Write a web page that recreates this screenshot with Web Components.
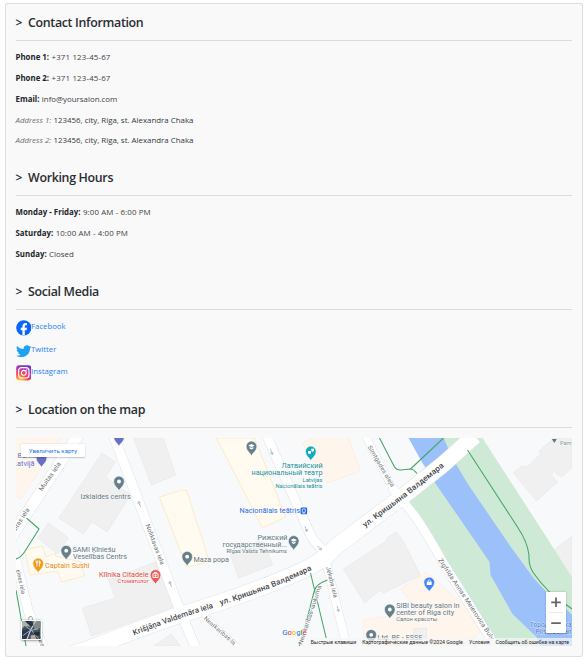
<!DOCTYPE html>
<html lang="en">
<head>
<meta charset="utf-8">
<title>Contact Information</title>
<style>
body{margin:0;background:#fff;font-family:"Open Sans","Noto Sans",sans-serif;color:#212529}
</style>
</head>
<body>
<contact-card>
  <info-section heading="Contact Information" style="height:155px">
    <info-row label="Phone 1:" style="--ls:.17px">+371 123-45-67</info-row>
    <info-row label="Phone 2:" style="--ls:.17px">+371 123-45-67</info-row>
    <info-row label="Email:">info@yoursalon.com</info-row>
    <info-row soft label="Address 1:">123456, city, Riga, st. Alexandra Chaka</info-row>
    <info-row soft label="Address 2:">123456, city, Riga, st. Alexandra Chaka</info-row>
  </info-section>
  <info-section heading="Working Hours" style="height:114px">
    <info-row label="Monday - Friday:" style="--ls:.12px">9:00 AM - 6:00 PM</info-row>
    <info-row label="Saturday:" style="--ls:.12px">10:00 AM - 4:00 PM</info-row>
    <info-row label="Sunday:">Closed</info-row>
  </info-section>
  <info-section heading="Social Media" style="height:118px;--top:5px">
    <social-link icon="facebook" style="height:24px">Facebook</social-link>
    <social-link icon="twitter" style="height:21.5px">Twitter</social-link>
    <social-link icon="instagram" style="height:23px">Instagram</social-link>
  </info-section>
  <info-section heading="Location on the map">
    <street-map></street-map>
  </info-section>
</contact-card>
<script>
function define(name, html, setup){
  customElements.define(name, class extends HTMLElement{
    constructor(){
      super();
      this.attachShadow({mode:'open'}).innerHTML = html;
    }
    connectedCallback(){ if(setup) setup(this, this.shadowRoot); }
  });
}

define('contact-card', `<style>
:host{display:block;box-sizing:border-box;width:578px;height:653.5px;margin:3px 0 0 4.5px;padding:0 10px;border:1px solid #dfdfdf;border-radius:3px;background:#f9f9f9;box-shadow:0 0 1px #ddd}
</style><slot></slot>`);

define('info-section', `<style>
:host{display:block;box-sizing:border-box}
h2{margin:0;height:37px;padding-top:1px;box-sizing:border-box;display:flex;align-items:center;gap:4px;font-size:12.4px;font-weight:600;letter-spacing:-.32px;line-height:18px;border-bottom:1px solid #dcdcdc;color:#2a2e32;white-space:nowrap}
h2 i{font-style:normal;font-size:12px;width:8.5px;}
.body{padding-top:var(--top,6px)}
</style><h2><i>&gt;</i><span></span></h2><div class="body"><slot></slot></div>`,
(el, root) => { root.querySelector('span').textContent = el.getAttribute('heading'); });

define('info-row', `<style>
:host{display:flex;gap:2.4px;height:20.75px;align-items:center;font-size:7.88px;line-height:12px;color:#3c4146;white-space:nowrap}
span{letter-spacing:var(--ls,0)}
b{font-weight:700;color:#212529}
:host([soft]) b{font-weight:400;font-style:italic;color:#6b6f73}
:host([soft]){color:#33383c}
</style><b></b><span><slot></slot></span>`,
(el, root) => { root.querySelector('b').textContent = el.getAttribute('label'); });

const icons = {
facebook:`<circle cx="8" cy="8" r="7.8" fill="#0866ff"/><path d="M6.6 15.6V10.4H4.9V8h1.7V6.7c0-2.4 1.2-3.6 3.3-3.6.5 0 1 .1 1.4.2v2.1h-1c-1 0-1.3.5-1.3 1.3V8h2.3l-.5 2.4H9v5.3z" fill="#fff"/>`,
twitter:`<path transform="translate(0 1) scale(.667 .62)" d="M23.95 4.57a10 10 0 0 1-2.82.77 4.96 4.96 0 0 0 2.16-2.72c-.95.55-2 .95-3.13 1.18a4.92 4.92 0 0 0-8.38 4.48C7.69 8.1 4.07 6.13 1.64 3.16a4.9 4.9 0 0 0-.67 2.48c0 1.71.87 3.21 2.19 4.1a4.9 4.9 0 0 1-2.23-.62v.06a4.92 4.92 0 0 0 3.95 4.83 5 5 0 0 1-2.21.08 4.94 4.94 0 0 0 4.6 3.42A9.87 9.87 0 0 1 0 19.54a14 14 0 0 0 7.55 2.21c9.05 0 14-7.5 14-13.98 0-.21 0-.42-.02-.63a9.94 9.94 0 0 0 2.42-2.57z" fill="#1da1f2"/>`,
instagram:`<defs><radialGradient id="g" cx=".25" cy="1.05" r="1.1"><stop offset="0" stop-color="#ffdd55"/><stop offset=".15" stop-color="#ffb340"/><stop offset=".45" stop-color="#fb4a45"/><stop offset=".7" stop-color="#c837a6"/><stop offset="1" stop-color="#6a38c8"/></radialGradient></defs><rect x=".2" y=".2" width="15.6" height="15.6" rx="3.4" fill="url(#g)"/><g fill="none" stroke="#fff" stroke-width="1.2"><rect x="2.7" y="2.7" width="10.6" height="10.6" rx="3"/><circle cx="8" cy="8" r="2.5"/></g><circle cx="11" cy="5" r=".75" fill="#fff"/>`};

define('social-link', `<style>
:host{display:flex;align-items:center;font-size:7.75px;line-height:12px;color:#2680f5;white-space:nowrap}
svg{width:15.6px;height:15.6px;margin-top:1.5px;flex:none}
span{margin-bottom:1.6px}
</style><svg viewBox="0 0 16 16"></svg><span><slot></slot></span>`,
(el, root) => { root.querySelector('svg').innerHTML = icons[el.getAttribute('icon')]; });

const streets = [
  ['M78.5 434L10 538',11],
  ['M112.5 434L180 612L196 650',9.5],
  ['M265.5 434L306 526Q312 542 323 550L331 558',9],
  ['M323 552L333 592L347 650',8],
  ['M364 434L396 496',7],
  ['M392 488L415 517Q428 536 441 560L497 650',8.5],
  ['M13 550L28 612L44 650',9],
  ['M202 613L241 650',4],
  ['M40 664L90 648Q135 630 176 616Q250 594 301 571Q323 561 335 547L404 495L443 464L474 436',16]
];
const greys = ['101.7,453 115,462 105,477 130,495 106.7,531.7 91,521.7 83.3,534 58.3,518.3','48,523 68,538 57,554 37,538','133,438 163,438 175,475 151,485','108,580 155,562 173,607 91,636 82,608 115,598','230,555 258,541 264,543 272,565 238,578','343,569 386,541 387,537 396,532 402,540 420,575 383,593 380,590 364,603','513,473 521,466 527,467 541,453 538,452 553,438 571.5,438 571.5,468 561,477 553,471 551,475 557,482 536,501','551,552 571.5,536 571.5,578','413,629 426,628 426,646 413,646','153,646 171,634 180,646'];
const yellows = ['159,497 178,491 180,489.5 182,491 186,490 209,562 186,567','216,438 254,438 285,517 262,528','24,550 42,546 45,557 55,553 55,556 80,562 84,576 61,582 57,571 30,575'];
const oranges = ['15,438 61,438 20,499 15,496','302,443 312,438 348,438 360,471 327,483','401,588 426,572 473,614 480,632 462,646 363,646 363,620 401,614 415,610'];
const paths = ['M26 518L38.5 529L24 552Q20 558 15 559','M15.5 590L25.5 646','M379 438L394 467Q396 470 400 470L410 469Q413 469 416.5 473.5','M410 469L443 438','M310 573L325.7 638','M299 646L305 625L314 590Q316 584 327 580','M467 450L517 527Q527 542 528.5 555Q528 566 533 573Q540 583 549 592L571.5 609'];
const grey='#5f7782', slate='#66808b';
/* text, x, baseline, width, size, colour */
const labels = [
  ['Latvijā',12.5,465.5,21.5,7.3,'#6670c4'],['Banka',17,458,20,7.3,'#6670c4'],
  ['Izklaides centrs',80,498.7,50.3,7.2,grey],
  ['SAMI Ķīniešu',72,552,43,7.2,grey],['Veselības Centrs',72.5,559.3,54,7.2,grey],
  ['Captain Sushi',44.5,568.3,44.5,7.2,'#e58a1c'],
  ['Klīnika Citadele',98.6,577.2,49.4,7.2,'#dd4a42'],['Стоматолог',117,583,31.5,5.6,'#dd4a42'],
  ['Maza popa',193,562.3,35.5,7.2,grey],
  ['Рижский',257,539.5,30,7,grey],['государственный...',222,546.7,64.5,7,grey],['Rīgas Valsts Tehnikums',226,552.7,60.5,5.8,grey],
  ['Латвийский',281,468,41.2,7.3,'#178f98'],['национальный театр',251,475.4,71,7.3,'#178f98'],['Latvijas',302,481.7,20,6,'#178f98'],['Nacionālais teātris',275,487.5,47,6,'#178f98'],
  ['Nacionālais teātris',239,513.4,60.5,7.1,'#2a6be0'],
  ['SIBI beauty salon in',395.7,607.5,63.3,7.2,grey],['center of Riga city',395.7,615,58,7.2,grey],['Салон красоты',395.7,621.2,41,5.6,grey],
  ['Ltd. BF - ESSE',377,639.5,45,7.2,grey],['Pam',559.5,444.5,11.5,6,'#8197a0'],
  ['Городской ка',530,626.8,41,7,'#3c74cf'],['Pilsētas kan',535,634,36,7,'#3c74cf']
];
/* guide path, text, length, size, colour, weight */
const curved = [
  ['M133.5 635.5Q176 618.5 216 607','Krišjāņa Valdemāra iela',84,7.8,'#45484b',500],
  ['M220 605Q271 590 314 568.5','ул. Кришьяна Валдемара',98,7.8,'#45484b',500],
  ['M364.5 527.5L404 498L447 464','ул. Кришьяна Валдемара',100,7.8,'#45484b',500],
  ['M41.5 491.5L63 460.5','Muitas iela',33.5,6.5],['M11.5 537L30 508.5','Muitas iela',32.5,6.5],
  ['M145 525L162 570','Noliktavas iela',43,6.2],
  ['M367 447L393 491','Simtgades aleja',47,6.2],
  ['M437.5 560L497 650','Zigfrīda Annas Meierovica Bulv.',98,6.3],
  ['M325.5 567L335 605','Jēkaba iela',32,6],
  ['M203 619L242 653','Neatkarības-la',40,6],
  ['M301.5 645L324 577','Neatkarības-laukums',62,6],
  ['M15.5 570L22 599','elnes iela',25,6],
  ['M27 617L42 650','Citadeles',34,6]
];
const pins = [[118.5,481.5,slate,'dot'],[251,446.5,slate,'cap'],[65.7,550.7,slate,'dot'],[186.7,556.7,slate,'dot'],[293.2,541,slate,'cap'],[389.3,609.5,slate,'dot'],[370.7,634.8,slate,'dot'],[41,458,'#6670c4',''],[118.5,437,'#6670c4',''],[310.3,451.5,'#12abc0','mask'],[37.7,563.5,'#f09a1a','fork'],[155,575,'#ea5b55','box'],[428.7,582.5,'#4285f4','bag']];
const glyphs = {
  '':'', dot:'<circle r="1.9" fill="#fff"/>',
  cap:'<path d="M-3.2-.9L0-2.6L3.2-.9L0 .8ZM-1.9.6L0 1.6L1.9.6V2L0 3L-1.9 2Z" fill="#fff"/>',
  mask:'<path d="M-2.8-.6H.2V1.7Q-1.3 3.2-2.8 1.7ZM.4-2.8H3.2V-.5Q2 .8.8 0V-1.2H.4Z" fill="#fff"/>',
  fork:'<path d="M-2-3V-.7H-1.3V3M-.5-3V-.7H-1.3M1.2 3V-2.8Q2.3-2.2 2.1.2H1.2" fill="none" stroke="#fff" stroke-width=".9"/>',
  box:'<path d="M-2.6-1.3H2.6V2.5H-2.6ZM-1.2-1.5V-2.6H1.2V-1.5" fill="none" stroke="#fff" stroke-width=".9"/><path d="M-1.3.7H1.3M0-.6V2" stroke="#fff" stroke-width=".8"/>',
  bag:'<path d="M-2.5-.9H2.5V2.5H-2.5Z" fill="#fff"/><path d="M-1.3-.9V-1.7Q0-3.8 1.3-1.7V-.9" fill="none" stroke="#fff" stroke-width=".8"/>'
};
const poly = (list, attrs) => list.map(p => `<polygon points="${p}" ${attrs}/>`).join('');
const map = `<svg class="map" viewBox="15.5 438 556 208" preserveAspectRatio="none">
<rect x="15" y="438" width="557" height="208" fill="#f8f9fb"/>
${poly(oranges,'fill="#fef5ed" stroke="#fdeadb" stroke-width=".6"')}
${poly(yellows,'fill="#fffbf0" stroke="#fbe7ba" stroke-width=".8"')}
${poly(greys,'fill="#f0f0f0" stroke="#e4e5e6" stroke-width=".6"')}
<polygon points="443,438 482,438 551,545 572,578 572,646 497,646 441,555 405,499 445,466" fill="#ceead6"/>
<polygon points="408,438 443,438 453,460 468,485 509,545 533,578 546,592 572,615 572,646 540,646 536,637 512,614 490,575 489,562 474,540 436,485 422,463" fill="#9cc0f9"/>
<g fill="none" stroke-linejoin="round">
${streets.map(s=>`<path d="${s[0]}" stroke="#e0e3e7" stroke-width="${s[1]+1}"/>`).join('')}
${streets.map(s=>`<path d="${s[0]}" stroke="#fff" stroke-width="${s[1]}"/>`).join('')}
${paths.map(p=>`<path d="${p}" stroke="#43a565" stroke-width="1.05"/>`).join('')}
${[[139,504,-20],[170,584,-20],[271,452,158],[305.5,529,158],[319,548,135],[337.5,609,165]].map(a=>`<path transform="translate(${a[0]} ${a[1]}) rotate(${a[2]})" d="M0 3V-2.4M-1.5-.6L0-2.6L1.5-.6" stroke="#a9b0c4" stroke-width=".8"/>`).join('')}
</g>
${curved.map((c,i)=>`<path id="c${i}" d="${c[0]}" fill="none"/><text font-size="${c[3]}" font-weight="${c[5]||400}" fill="${c[4]||'#6c7074'}" textLength="${c[2]}" lengthAdjust="spacingAndGlyphs" stroke="#fff" stroke-width="1" paint-order="stroke"><textPath href="#c${i}" textLength="${c[2]}" lengthAdjust="spacingAndGlyphs">${c[1]}</textPath></text>`).join('')}
${labels.map(l=>`<text x="${l[1]}" y="${l[2]}" font-size="${l[4]}" fill="${l[5]}" textLength="${l[3]}" lengthAdjust="spacingAndGlyphs" stroke="#fff" stroke-opacity=".7" stroke-width=".8" paint-order="stroke">${l[0]}</text>`).join('')}
${pins.map(p=>`<g transform="translate(${p[0]} ${p[1]})"><path d="M0 9.6C-.6 6.6-5.4 4.6-5.4 0A5.4 5.4 0 0 1 5.4 0C5.4 4.6.6 6.6 0 9.6Z" fill="${p[2]}" stroke="#fff" stroke-width=".6"/>${glyphs[p[3]]}</g>`).join('')}
<path d="M551.3 439H556.3L553.8 443Z" fill="#5f7782"/>
<rect x="300" y="507.5" width="6.6" height="6.8" rx="1.2" fill="#1a66e0"/><path d="M301.8 509H304.8V512.3H301.8ZM302 513.2H304.6" stroke="#fff" stroke-width=".7" fill="none"/>
<text x="281.7" y="635.3" font-size="8" font-weight="500" textLength="24.5" stroke="#fff" stroke-width="1" paint-order="stroke"><tspan fill="#4285f4">G</tspan><tspan fill="#ea4335">o</tspan><tspan fill="#fbbc05">o</tspan><tspan fill="#4285f4">g</tspan><tspan fill="#34a853">l</tspan><tspan fill="#ea4335">e</tspan></text>
<rect x="308" y="638" width="264" height="8" fill="#f5f5f5" fill-opacity=".72"/>
<g font-size="5.3" fill="#1c1c1c">
<text x="310.3" y="644.4" textLength="45.5" lengthAdjust="spacingAndGlyphs">Быстрые клавиши</text>
<text x="361.7" y="644.4" textLength="100.5" lengthAdjust="spacingAndGlyphs">Картографические данные ©2024 Google</text>
<text x="468.6" y="644.4" textLength="20.4" lengthAdjust="spacingAndGlyphs">Условия</text>
<text x="495" y="644.4" textLength="73.5" lengthAdjust="spacingAndGlyphs">Сообщить об ошибке на карте</text></g>
</svg>`;

define('street-map', `<style>
:host{display:block;position:relative;width:556px;height:208px;margin-top:4px;overflow:hidden;font-family:Roboto,"Noto Sans",sans-serif}
.map{display:block;width:556px;height:208px}
map-button,map-zoom,map-thumb{position:absolute}
map-button{left:5.5px;top:5.5px}
map-zoom{right:5.5px;bottom:13px}
map-thumb{left:5.5px;bottom:6px}
</style>${map}<map-button>Увеличить карту</map-button><map-thumb></map-thumb><map-zoom></map-zoom>`);

define('map-button', `<style>
:host{display:flex;align-items:center;justify-content:center;width:64px;height:13.5px;background:#fff;border-radius:1px;box-shadow:0 .5px 1.5px rgba(0,0,0,.22);color:#1a73e8;font-size:6.1px;font-weight:400;letter-spacing:.05px;white-space:nowrap}
</style><slot></slot>`);

define('map-zoom', `<style>
:host{display:block;width:20px;height:41px;background:#fff;border-radius:1px;box-shadow:0 .5px 2px rgba(0,0,0,.3)}
svg{display:block}
</style><svg width="20" height="41" viewBox="0 0 20 41" fill="none"><path d="M5.2 10.3H14.8M10 5.5V15.1M5.2 31.2H14.8" stroke="#666" stroke-width="1.8"/><path d="M2.5 20.5H17.5" stroke="#e6e6e6" stroke-width=".8"/></svg>`);

define('map-thumb', `<style>
:host{display:block;box-sizing:border-box;width:20.5px;height:20.5px;border:1px solid #fff;border-radius:2px;box-shadow:0 .5px 2px rgba(0,0,0,.35);overflow:hidden}
svg{display:block;width:100%;height:100%}
</style><svg viewBox="0 0 19 19"><rect width="19" height="19" fill="#45505f"/><path d="M0 0H7L9 6L3 5L0 8Z" fill="#a9b4ad"/><path d="M11 0H19V7L13 9Z" fill="#7d8b84"/><path d="M0 10L7 8L11 11L4 19H0Z" fill="#2b3650"/><path d="M14 0L9 9L5 19" fill="none" stroke="#c5cdd2" stroke-width="1.3"/><path d="M2 4L10 10L17 18" fill="none" stroke="#aeb8c2" stroke-width="1"/><path d="M1 15L8 10L17 8" fill="none" stroke="#9fb0c5" stroke-width="1"/><path d="M11 12L18 11L18 15L14 15Z" fill="#222c3c"/><path d="M9 15L13 14L15 19H9Z" fill="#b5a99d"/><path d="M3 0L9 6L12 4L9 0Z" fill="#263245"/></svg>`);
</script>
</body>
</html>
